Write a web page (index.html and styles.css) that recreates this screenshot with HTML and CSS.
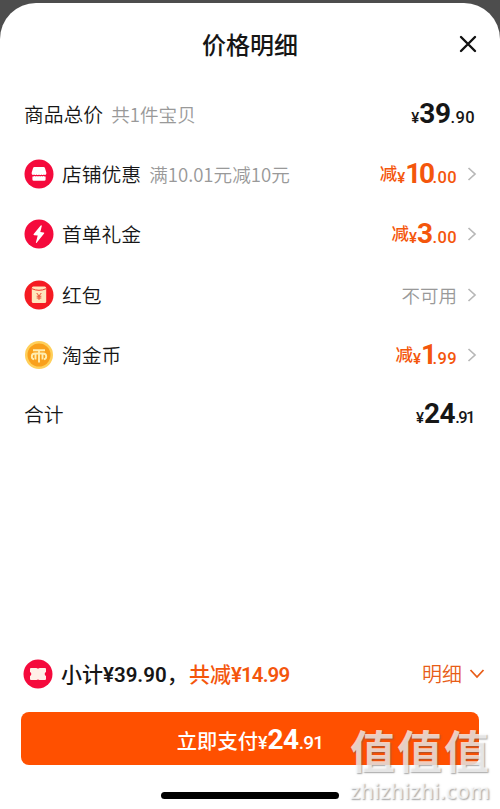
FILE: index.html
```html
<!DOCTYPE html>
<html lang="zh-CN">
<head>
<meta charset="utf-8">
<title>价格明细</title>
<link rel="stylesheet" href="styles.css">
</head>
<body>
<main class="sheet">
  <header class="header">
    <h1 class="title">价格明细</h1>
    <svg class="close" viewBox="0 0 18 18"><path d="M2 2L16 16M16 2L2 16"/></svg>
  </header>
  <section class="rows">
    <div class="row">
      <span class="name">商品总价</span><span class="note">共1件宝贝</span>
      <span class="price plain"><span class="yen">¥</span><span class="whole">39</span><span class="cents">.90</span></span>
    </div>
    <div class="row">
      <svg class="icon" viewBox="0 0 30 30"><circle cx="15" cy="15" r="14.5" fill="#f50a3c"/><path d="M10.500 8h9q1.200 0 1.500 1.200l1.300 4.300v1.500q-1 1.600-2.500.5-1.200 1.100-2.400 0-1.200 1.100-2.400 0-1.200 1.100-2.400 0-1.200 1.100-2.400 0-1.500 1.100-2.500-.5v-1.500l1.300-4.300Q9.300 8 10.500 8z" fill="#fff"/><path d="M8.400 17.500q1.300.3 2.200-.4 1.300.8 2.200 0 1.300.8 2.200 0 1.300.8 2.200 0 1.300.8 2.200 0 .9.700 2.200.4v2.900q0 1.400-1.400 1.400H9.800q-1.400 0-1.400-1.400z" fill="#fff"/></svg>
      <span class="name">店铺优惠</span><span class="note">满10.01元减10元</span>
      <span class="price off"><span class="cut">减</span><span class="yen">¥</span><span class="whole tight">10</span><span class="cents">.00</span></span>
      <svg class="arrow" viewBox="0 0 10 16"><path d="M1.500 2L8 8L1.500 14"/></svg>
    </div>
    <div class="row">
      <svg class="icon" viewBox="0 0 30 30"><circle cx="15" cy="15" r="14.500" fill="#f50a3c"/><path d="M16.700 6.500L9.700 15q-.7 1 .5 1.200l3.500.3-1.800 7q0 .9.800.2l7.400-9.200q.6-1-.5-1.100l-3.300-.3 1.500-6.200q0-1.100-1.100-.4z" fill="#fff"/></svg>
      <span class="name">首单礼金</span>
      <span class="price off"><span class="cut">减</span><span class="yen">¥</span><span class="whole">3</span><span class="cents">.00</span></span>
      <svg class="arrow" viewBox="0 0 10 16"><path d="M1.500 2L8 8L1.500 14"/></svg>
    </div>
    <div class="row">
      <svg class="icon" viewBox="0 0 30 30"><circle cx="15" cy="15" r="14.500" fill="#f51b22"/><rect x="7.800" y="6.500" width="14.400" height="16.500" rx="1.500" fill="#ffe6bd"/><path d="M7.800 8.700q7.200 3.200 14.400 0" fill="none" stroke="#f03a2d" stroke-width="1"/><path d="M12.700 13l2.300 2.900 2.300-2.900M15 15.900v4M12.700 16.200h4.600M12.700 18h4.600" fill="none" stroke="#e94a32" stroke-width="1"/></svg>
      <span class="name">红包</span>
      <span class="unavailable">不可用</span>
      <svg class="arrow" viewBox="0 0 10 16"><path d="M1.500 2L8 8L1.500 14"/></svg>
    </div>
    <div class="row">
      <svg class="icon" viewBox="0 0 30 30"><circle cx="15" cy="15" r="14" fill="#ffcf59"/><circle cx="15" cy="15" r="11.500" fill="#f9a01b"/><path d="M9 10.200h12M15 10v12.500M10 19.300q-2.200-.3-2.200-2.800 0-3 3.200-3h8q3.200 0 3.200 3 0 2.500-2.200 2.800M11.500 14v5.500M18.500 14v5.500" fill="none" stroke="#ffedb0" stroke-width="1.900"/></svg>
      <span class="name">淘金币</span>
      <span class="price off"><span class="cut">减</span><span class="yen">¥</span><span class="whole single">1</span><span class="cents">.99</span></span>
      <svg class="arrow" viewBox="0 0 10 16"><path d="M1.500 2L8 8L1.500 14"/></svg>
    </div>
    <div class="row">
      <span class="name">合计</span>
      <span class="price plain"><span class="yen">¥</span><span class="whole">24</span><span class="cents narrow">.91</span></span>
    </div>
  </section>
  <footer class="footer">
    <div class="summary">
      <svg class="icon" viewBox="0 0 30 30"><circle cx="15" cy="15" r="14.500" fill="#f50a3c"/><path d="M8 9h5.500q1.500 1.200 3 0H22q1 0 1 1v2.900q-1.300.6-1.300 2.100t1.300 2.100V20q0 1-1 1h-5.500q-1.500-1.200-3 0H8q-1 0-1-1v-2.900q1.300-.6 1.300-2.100T7 12.900V10q0-1 1-1z" fill="#fff0e8"/></svg>
      <span class="subtotal">小计<span class="num">¥39.90</span>，</span>
      <span class="saved">共减<span class="num dense">¥14.99</span></span>
      <span class="detail">明细</span>
      <svg class="down" viewBox="0 0 16 12"><path d="M1.500 2L8 9L14.500 2"/></svg>
    </div>
    <button class="pay"><span class="paytext">立即支付</span><span class="yen">¥</span><span class="whole">24</span><span class="cents narrow">.91</span></button>
    <div class="home"></div>
  </footer>
</main>
<div class="watermark"><div class="mark">值值值</div><div class="site">zhizhizhi.com</div></div>
</body>
</html>
```

FILE: styles.css
```css
* { box-sizing: border-box; }
body { margin: 0; height: 809px; padding-top: 3px; overflow: hidden; background: #4d4d4d; font-family: "Noto Sans CJK SC", sans-serif; color: #161616; }
.sheet { height: 806px; display: flex; flex-direction: column; background: #fff; border-radius: 36px 36px 0 0; }
.header { height: 81px; display: grid; grid-template-columns: 1fr auto 1fr; align-items: center; padding: 0 23px; }
.title { grid-column: 2; margin: 0; font-size: 24px; line-height: 36px; font-weight: 500; }
.close { width: 18px; height: 18px; justify-self: end; fill: none; stroke: #111; stroke-width: 2.4; stroke-linecap: round; }
.rows { padding: 0 24px; }
.row { height: 60.200px; display: flex; align-items: center; white-space: nowrap; }
.row:last-child { height: 59px; }
.icon { width: 30px; height: 30px; flex: none; margin-right: 8px; }
.name { font-size: 19.800px; line-height: 30px; font-weight: 350; }
.note { margin-left: 8px; font-size: 18.600px; line-height: 30px; font-weight: 350; color: #999; }
.price { margin-left: auto; height: 30px; display: flex; align-items: baseline; font-family: Roboto, "Noto Sans CJK SC", sans-serif; font-weight: 700; line-height: 30px; }
.plain { margin-right: 1px; }
.off { color: #f4560c; }
.cut { align-self: flex-start; font-size: 17.500px; line-height: 31px; font-weight: 500; }
.yen { font-size: 15px; font-weight: 500; }
.whole { font-size: 28px; letter-spacing: -.5px; }
.tight { letter-spacing: -2.500px; }
.single { letter-spacing: -4.500px; }
.cents { font-size: 16.500px; font-weight: 500; letter-spacing: .4px; }
.narrow { letter-spacing: -.8px; }
.plain .narrow { margin-right: 1px; letter-spacing: -1.500px; }
.arrow { width: 10px; height: 16px; margin-left: 10px; margin-right: -1px; fill: none; stroke: #b8b8b8; stroke-width: 1.700; }
.unavailable { margin-left: auto; font-size: 18.500px; line-height: 30px; font-weight: 350; color: #999; }
.footer { margin-top: auto; }
.summary { height: 60px; display: flex; align-items: center; padding: 0 15px 0 23px; white-space: nowrap; font-size: 21px; line-height: 30px; font-weight: 500; }
.num { font-family: Roboto, sans-serif; font-size: 20.500px; font-weight: 600; }
.dense { letter-spacing: -.9px; }
.subtotal { width: 128px; }
.saved { color: #f4560c; }
.detail { margin-left: auto; font-size: 20px; font-weight: 350; color: #e85d18; }
.down { width: 16px; height: 12px; margin-left: 7px; fill: none; stroke: #e85d18; stroke-width: 1.800; }
.pay { width: 458px; height: 53px; display: flex; align-items: baseline; justify-content: center; margin: 8px 0 27px 21px; padding: 0; border: 0; border-radius: 8px; background: #ff5000; color: #fff; font-family: Roboto, "Noto Sans CJK SC", sans-serif; font-weight: 700; line-height: 55px; }
.paytext { font-family: "Noto Sans CJK SC", sans-serif; font-size: 20.300px; font-weight: 500; }
.pay .yen { font-size: 18px; }
.pay .cents { font-size: 19px; }
.home { width: 178px; height: 7px; margin: 0 auto 10px; border-radius: 4px; background: #000; }
.watermark { position: absolute; left: 350px; top: 725px; width: 145px; color: rgba(255,255,255,.72); text-shadow: 1px 1px 1.500px rgba(90,90,90,.55); white-space: nowrap; }
.mark { font-size: 45px; line-height: 50px; letter-spacing: 2px; font-weight: 700; }
.site { margin-top: 3px; font-family: "Open Sans", sans-serif; font-size: 21.500px; line-height: 26px; font-weight: 600; }
```
